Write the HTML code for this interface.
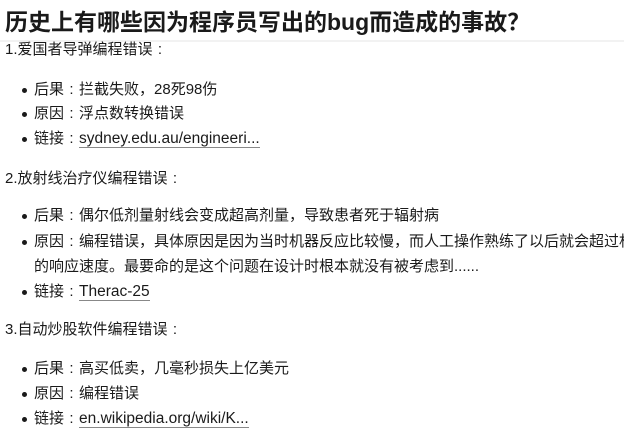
<!DOCTYPE html>
<html><head><meta charset="utf-8"><style>
html,body{margin:0;padding:0;width:624px;height:433px;overflow:hidden;background:#fff}
body{font-family:"Liberation Sans","Noto Sans CJK SC",sans-serif;color:#1a1a1a;font-size:15px}
h1{margin:0;position:absolute;left:5px;top:3px;font-size:23px;font-weight:bold;white-space:nowrap;color:#1a1a1a}
.hr{position:absolute;left:0;top:40px;width:624px;height:2px;background:#f2f2f2}
.p{position:absolute;left:5px;white-space:nowrap;line-height:20px}
.li{position:absolute;left:34px;white-space:nowrap;line-height:20px}
.li:before{content:"";position:absolute;left:-12px;top:8px;width:5px;height:5px;border-radius:50%;background:#1a1a1a}
.li.nb:before{display:none}
.c{display:inline-block;width:15px;text-align:center}
a{color:#1a1a1a;text-decoration:none;border-bottom:1px solid #888;font-size:15.5px}
</style></head><body>
<h1>历史上有哪些因为程序员写出的bug而造成的事故？</h1>
<div class="hr"></div>
<div class="p" style="top:40px">1.爱国者导弹编程错误<span class="c">:</span></div>
<div class="li" style="top:80px">后果<span class="c">:</span>拦截失败<span class="c">，</span>28死98伤</div>
<div class="li" style="top:104px">原因<span class="c">:</span>浮点数转换错误</div>
<div class="li" style="top:129px">链接<span class="c">:</span><a>sydney.edu.au/engineeri...</a></div>
<div class="p" style="top:169px">2.放射线治疗仪编程错误<span class="c">:</span></div>
<div class="li" style="top:206px">后果<span class="c">:</span>偶尔低剂量射线会变成超高剂量<span class="c">，</span>导致患者死于辐射病</div>
<div class="li" style="top:232px">原因<span class="c">:</span>编程错误<span class="c">，</span>具体原因是因为当时机器反应比较慢<span class="c">，</span>而人工操作熟练了以后就会超过机器</div>
<div class="li nb" style="top:257px">的响应速度。最要命的是这个问题在设计时根本就没有被考虑到......</div>
<div class="li" style="top:282px">链接<span class="c">:</span><a>Therac-25</a></div>
<div class="p" style="top:320px">3.自动炒股软件编程错误<span class="c">:</span></div>
<div class="li" style="top:359px">后果<span class="c">:</span>高买低卖<span class="c">，</span>几毫秒损失上亿美元</div>
<div class="li" style="top:384px">原因<span class="c">:</span>编程错误</div>
<div class="li" style="top:409px">链接<span class="c">:</span><a>en.wikipedia.org/wiki/K...</a></div>
</body></html>
